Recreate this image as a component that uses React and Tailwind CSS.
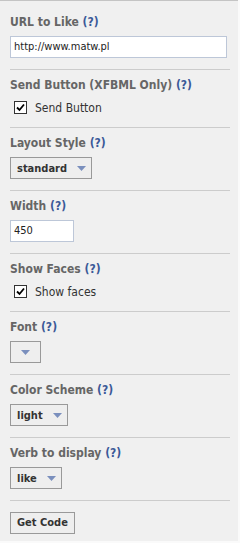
import React from "react";

const font = { fontFamily: '"DejaVu Sans Condensed", "DejaVu Sans", Tahoma, sans-serif' };

function Label({ children }) {
  return (
    <div className="h-4 leading-4 text-[12px] font-bold text-[#666666] whitespace-nowrap">
      {children} <span className="text-[#3b5998]">(?)</span>
    </div>
  );
}

function Caret() {
  return (
    <svg width="9" height="5" viewBox="0 0 9 5" className="block">
      <polygon points="0,0 9,0 4.5,5" fill="#7a8fbd" />
    </svg>
  );
}

function Select({ text }) {
  return (
    <div
      className={`flex h-[22px] items-center border border-[#999999] bg-[#eeeeee] text-[11px] font-bold text-[#333333] ${
        text ? "pl-[6px] pr-[5px] gap-[10px]" : "w-[31px] justify-center"
      }`}
    >
      {text && <span className="leading-none">{text}</span>}
      <Caret />
    </div>
  );
}

function Check({ label }) {
  return (
    <div className="flex h-[17px] items-center pl-[4px] gap-[8px]">
      <div className="w-[13px] h-[13px] border border-[#333333] bg-white flex items-center justify-center">
        <svg width="9" height="9" viewBox="0 0 9 9" className="block">
          <path d="M1 4.5 L3.5 7 L8 1.5" stroke="#000" strokeWidth="1.8" fill="none" />
        </svg>
      </div>
      <span className="text-[12px] text-[#333333] leading-none">{label}</span>
    </div>
  );
}

function Section({ label, children }) {
  return (
    <div className="pt-[7px] pb-[11px] border-b border-[#cccccc] flex flex-col items-start">
      <Label>{label}</Label>
      <div className="mt-[6px] flex">{children}</div>
    </div>
  );
}

export default function App() {
  return (
    <div className="w-[240px] h-[543px] bg-[#fafafa]" style={font}>
      <div className="w-[238px] h-[541px] bg-[#f0f0f0] border-t border-[#c4c4c4] pt-[6px] pl-[10px] pr-[8px]">
        <Section label="URL to Like">
          <div className="h-[22px] w-[217px] border border-[#bdc7d8] bg-white flex items-center pl-[3px] text-[11px] text-[#222222]">
            http://www.matw.pl
          </div>
        </Section>
        <Section label="Send Button (XFBML Only)">
          <Check label="Send Button" />
        </Section>
        <Section label="Layout Style">
          <Select text="standard" />
        </Section>
        <Section label="Width">
          <div className="h-[22px] w-[64px] border border-[#bdc7d8] bg-white flex items-center pl-[3px] text-[11px] text-[#222222]">
            450
          </div>
        </Section>
        <Section label="Show Faces">
          <Check label="Show faces" />
        </Section>
        <Section label="Font">
          <Select />
        </Section>
        <Section label="Color Scheme">
          <Select text="light" />
        </Section>
        <Section label="Verb to display">
          <Select text="like" />
        </Section>
        <div className="pt-[11px] flex">
          <div className="flex h-[22px] items-center border border-[#999999] bg-[#eeeeee] px-[6px] text-[11px] font-bold text-[#333333]">
            Get Code
          </div>
        </div>
      </div>
    </div>
  );
}
